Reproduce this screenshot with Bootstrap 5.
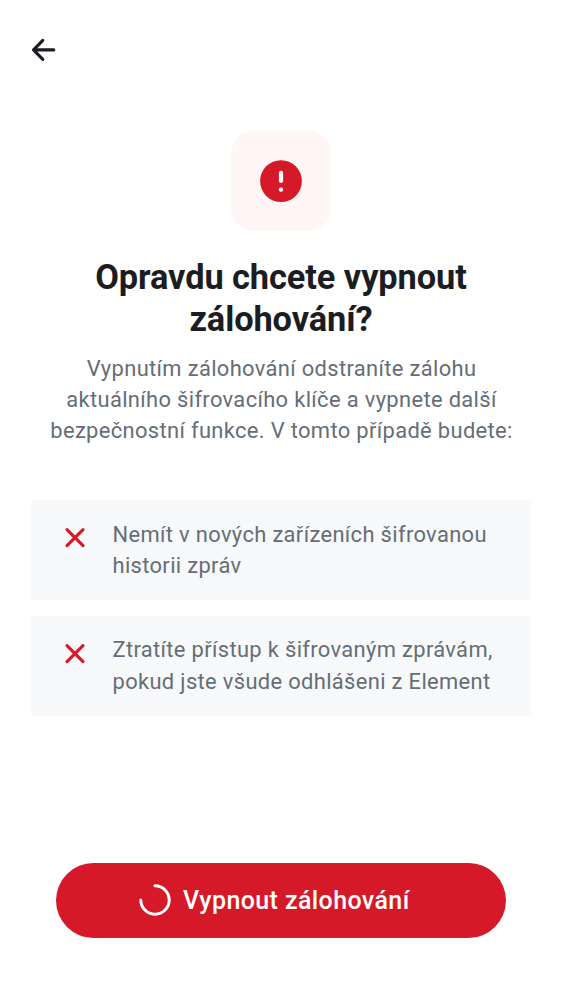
<!DOCTYPE html>
<html lang="cs">
<head>
<meta charset="utf-8">
<meta name="viewport" content="width=device-width, initial-scale=1">
<title>Vypnout zálohování</title>
<link href="https://cdn.jsdelivr.net/npm/bootstrap@5.3.0/dist/css/bootstrap.min.css" rel="stylesheet">
<style>
  body { font-family: Roboto, sans-serif; background: #fff; color: #1b1d22; }
  .screen { height: 1000px; padding: 31px 31px 62.5px; }
  .back { width: 38px; height: 38px; margin-left: -6px; }
  .hero-tile { width: 100px; height: 100px; border-radius: 22px; background: #fff6f5; margin-top: 62px; }
  .title { font-size: 34.375px; line-height: 42.2px; font-weight: 700; letter-spacing: -.08px; margin: 24.5px 0 12.6px; }
  .copy { font-size: 21.9px; line-height: 31.4px; letter-spacing: .35px; color: #656d77; }
  .intro { padding-left: 1px; }
  .consequences { margin-top: 53.7px; gap: 15.6px; }
  .consequence { height: 100px; padding: 18.3px 25px; background: #f7f9fa; }
  .consequence svg { margin: .3px 18.5px 0 0; flex: none; }
  .action { height: 75px; margin: 0 25px; font-size: 25px; font-weight: 500; letter-spacing: .4px; gap: 12px;
    --bs-btn-color: #fff; --bs-btn-bg: #d51928; --bs-btn-border-color: #d51928;
    --bs-btn-hover-color: #fff; --bs-btn-hover-bg: #b8101f; }
  .action-label { padding: 1px 13.5px 0 0; }
</style>
</head>
<body>
<main class="screen d-flex flex-column overflow-hidden">
  <header>
    <button class="back btn p-0 border-0 d-flex" aria-label="Zpět">
      <svg width="38" height="38" viewBox="0 0 38 38" fill="none" stroke="#1b1d22" stroke-width="3.1" stroke-linecap="round" stroke-linejoin="round"><path d="M28.8 18.9H9M17.8 9.4 8.5 18.9l9.3 9.5"/></svg>
    </button>
  </header>
  <section class="text-center">
    <div class="hero-tile mx-auto d-flex align-items-center justify-content-center">
      <svg width="42" height="42" viewBox="0 0 42 42"><circle cx="21" cy="21.1" r="20.9" fill="#d51928"/><path d="M21 12.9v8" stroke="#fff" stroke-width="4.2" stroke-linecap="round"/><circle cx="21" cy="29.6" r="2.2" fill="#fff"/></svg>
    </div>
    <h1 class="title text-nowrap">Opravdu chcete vypnout<br>zálohování?</h1>
    <p class="copy intro text-nowrap mb-0">Vypnutím zálohování odstraníte zálohu<br>aktuálního šifrovacího klíče a vypnete další<br>bezpečnostní funkce. V tomto případě budete:</p>
  </section>
  <ul class="consequences list-unstyled d-flex flex-column mb-0">
    <li class="consequence copy d-flex text-nowrap">
      <svg width="38" height="38" viewBox="0 0 38 38" stroke="#d51928" stroke-width="3.1" stroke-linecap="round"><path d="m11 10.6 16 16M27 10.6l-16 16"/></svg>
      <span>Nemít v nových zařízeních šifrovanou<br>historii zpráv</span>
    </li>
    <li class="consequence copy d-flex text-nowrap">
      <svg width="38" height="38" viewBox="0 0 38 38" stroke="#d51928" stroke-width="3.1" stroke-linecap="round"><path d="m11 10.6 16 16M27 10.6l-16 16"/></svg>
      <span>Ztratíte přístup k šifrovaným zprávám,<br>pokud jste všude odhlášeni z Element</span>
    </li>
  </ul>
  <button class="action btn rounded-pill mt-auto p-0 border-0 d-flex align-items-center justify-content-center">
    <svg width="32" height="32" viewBox="0 0 32 32" fill="none" stroke="#fff" stroke-width="3" stroke-linecap="round"><path d="M16 1.8A14.2 14.2 0 1 1 1.8 16"/></svg>
    <span class="action-label">Vypnout zálohování</span>
  </button>
</main>
<script src="https://cdn.jsdelivr.net/npm/bootstrap@5.3.0/dist/js/bootstrap.bundle.min.js"></script>
</body>
</html>
